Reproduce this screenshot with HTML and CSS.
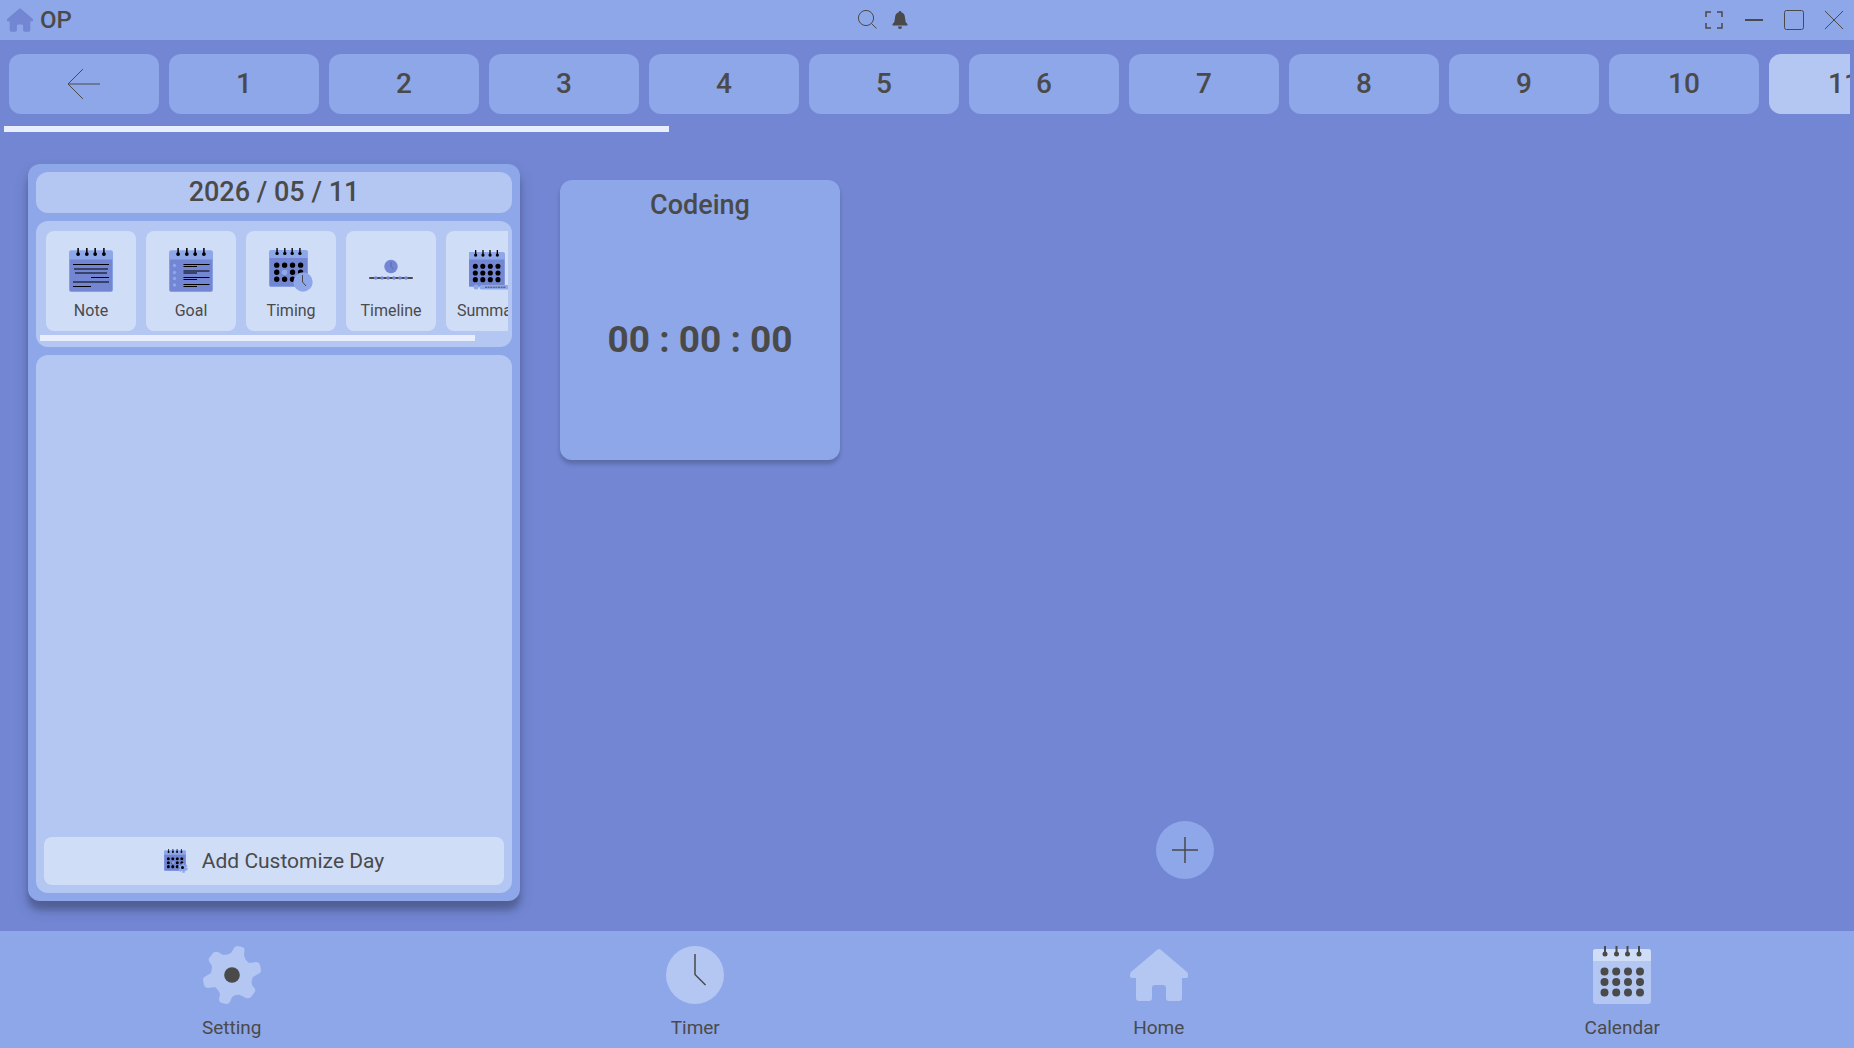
FILE: index.html
```html
<!DOCTYPE html>
<html lang="en">
<head>
    <meta charset="UTF-8">
    <meta name="viewport" content="width=device-width, initial-scale=1.0">
    <title>OP</title>
    <link rel="stylesheet" href="styles.css">
</head>
<body>
    <svg class="sprite" aria-hidden="true">
        <symbol id="home" viewBox="0 0 58 58">
            <path d="M27 4Q29 2 31 4L57 26Q58 27 58 29V30Q58 32 55 32H52V52Q52 55 49 55H39Q36 55 36 52V42Q36 39 33 39H25Q22 39 22 42V52Q22 55 19 55H9Q6 55 6 52V32H3Q0 32 0 30V29Q0 27 1 26Z"/>
        </symbol>
        <symbol id="pins" viewBox="0 0 58 12">
            <path d="M12 0V8M23.5 0V8M34.5 0V8M46 0V8" stroke="currentColor" stroke-width="2"/>
            <g fill="currentColor">
                <circle cx="12" cy="8" r="2.5"/><circle cx="23.5" cy="8" r="2.5"/><circle cx="34.5" cy="8" r="2.5"/><circle cx="46" cy="8" r="2.5"/>
            </g>
        </symbol>
        <symbol id="dots" viewBox="0 0 58 58">
            <path d="M11.5 25.5h.01M23.2 25.5h.01M35 25.5h.01M47 25.5h.01M11.5 36h.01M23.2 36h.01M35 36h.01M47 36h.01M11.5 46.5h.01M23.2 46.5h.01M35 46.5h.01M47 46.5h.01" stroke="currentColor" stroke-width="8" stroke-linecap="round"/>
        </symbol>
        <symbol id="page" viewBox="0 0 58 58">
            <rect y="3" width="58" height="55" rx="3" fill="#8ea7e9"/>
            <path d="M1 15H57V55Q57 57 55 57H3Q1 57 1 55Z" fill="#7286d3"/>
            <use href="#pins" width="58" height="12"/>
        </symbol>
    </svg>

    <header class="titlebar">
        <div class="brand">
            <svg class="brand-icon"><use href="#home"/></svg>
            <span>OP</span>
        </div>
        <div class="quick">
            <button aria-label="Search">
                <svg viewBox="0 0 20 20"><circle cx="9" cy="8" r="7.6"/><path d="M14.5 13.5L19.5 18.5"/></svg>
            </button>
            <button aria-label="Notifications">
                <svg class="solid" viewBox="0 0 20 20"><path d="M10 1Q11.300 1 11.300 2.300Q15 3.500 15 8Q15 12 17.500 14.200V15.500H2.500V14.200Q5 12 5 8Q5 3.500 8.700 2.300Q8.700 1 10 1ZM8 16.500H12Q12 19 10 19Q8 19 8 16.500Z"/></svg>
            </button>
        </div>
        <div class="window-buttons">
            <button aria-label="Fullscreen">
                <svg viewBox="0 0 20 20"><path stroke-width="1.500" d="M2 7V2H7M13 2H18V7M18 13V18H13M7 18H2V13"/></svg>
            </button>
            <button aria-label="Minimize">
                <svg viewBox="0 0 20 20"><path stroke-width="2" d="M1 10H19"/></svg>
            </button>
            <button aria-label="Maximize">
                <svg viewBox="0 0 20 20"><rect x=".5" y=".5" width="19" height="19" rx="2"/></svg>
            </button>
            <button aria-label="Close">
                <svg viewBox="0 0 20 20"><path d="M1 1L19 19M19 1L1 19"/></svg>
            </button>
        </div>
    </header>

    <nav class="days" aria-label="Days">
        <div class="days-row">
            <button aria-label="Back">
                <svg class="arrow" viewBox="0 0 34 30"><path d="M33 15H1"/><path d="M16 0L1 15L16 30"/></svg>
            </button>
            <button>1</button>
            <button>2</button>
            <button>3</button>
            <button>4</button>
            <button>5</button>
            <button>6</button>
            <button>7</button>
            <button>8</button>
            <button>9</button>
            <button>10</button>
            <button class="active">11</button>
        </div>
        <div class="scroll-thumb days-thumb"></div>
    </nav>

    <main>
        <section class="panel">
            <h1>2026 / 05 / 11</h1>
            <div class="tools">
                <div class="tools-row">
                    <button>
                        <svg viewBox="0 0 44 44">
                            <use href="#page" width="44" height="44"/>
                            <path d="M4 16.500H40M5 21H39M6 25H38M22 29.500H40M4 34H40M4 38.500H22" stroke="#000"/>
                        </svg>
                        Note
                    </button>
                    <button>
                        <svg viewBox="0 0 44 44">
                            <use href="#page" width="44" height="44"/>
                            <path d="M14.500 16.500H40.500M14.500 18.500H28M14.500 23H40.500M14.500 25H28M14.500 29.500H40.500M14.500 31.500H28M14.500 36.500H40.500M14.500 38.500H28" stroke="#000"/>
                            <g fill="#8ea7e9"><circle cx="5.500" cy="17.500" r="1.700"/><circle cx="5.500" cy="24.500" r="1.700"/><circle cx="5.500" cy="30.500" r="1.700"/><circle cx="5.500" cy="37" r="1.700"/></g>
                        </svg>
                        Goal
                    </button>
                    <button>
                        <svg viewBox="0 0 44 44">
                            <use href="#page" width="39" height="39"/>
                            <use href="#dots" width="39" height="39"/>
                            <circle cx="15.600" cy="24.200" r="3" fill="#8ea7e9"/>
                            <circle cx="34" cy="34" r="9.700" fill="#8ea7e9"/>
                            <path d="M33.500 27V34L37 38" fill="none" stroke="#4a4a4a"/>
                        </svg>
                        Timing
                    </button>
                    <button>
                        <svg viewBox="0 0 44 44">
                            <circle cx="22" cy="18.500" r="6.700" fill="#7286d3"/>
                            <path d="M22 14V18.500L24.500 21" fill="none" stroke="#4a5a9a" stroke-width=".7"/>
                            <path d="M1 30H43" stroke="#4a4a4a" stroke-width="2" stroke-linecap="round"/>
                            <path d="M6.700 30h.01M13 30h.01M19 30h.01M25 30h.01M31 30h.01M37 30h.01" stroke="#7286d3" stroke-width="3.500" stroke-linecap="round"/>
                        </svg>
                        Timeline
                    </button>
                    <button>
                        <svg viewBox="1 0 44 44">
                            <use href="#page" y="2" width="37" height="37"/>
                            <use href="#dots" y="2" width="37" height="37"/>
                            <circle cx="8" cy="39" r="2.500" fill="#8ea7e9"/>
                            <rect x="11.500" y="37" width="34" height="4.500" rx="2" fill="#8ea7e9"/>
                            <path d="M17 39.200H38" stroke="#4a4a4a" stroke-dasharray="2 .6"/>
                        </svg>
                        Summary
                    </button>
                </div>
                <div class="scroll-thumb tools-thumb"></div>
            </div>
            <div class="entries">
                <button class="add-day">
                    <svg viewBox="0 0 24 24">
                        <use href="#page" width="22" height="22"/>
                        <use href="#dots" width="22" height="22"/>
                        <circle cx="9" cy="13.500" r="1.600" fill="#8ea7e9"/>
                        <circle cx="19" cy="19" r="3.800" fill="none" stroke="#8ea7e9" stroke-width="2" stroke-dasharray="2.400 1.600"/>
                        <circle cx="19" cy="19" r="3.200" fill="#8ea7e9"/>
                        <circle cx="18.500" cy="18.500" r="1.500"/>
                    </svg>
                    Add Customize Day
                </button>
            </div>
        </section>

        <section class="board">
            <article class="timer-card">
                <h2>Codeing</h2>
                <time>00 : 00 : 00</time>
            </article>
            <button class="add-timer" aria-label="Add timer">
                <svg viewBox="0 0 26 26"><path d="M13 0V26M0 13H26"/></svg>
            </button>
        </section>
    </main>

    <nav class="tabs" aria-label="Main">
        <a href="#setting">
            <svg viewBox="0 0 58 58">
                <path d="M31 2Q32 0 35 0L39 1Q42 2 41.500 4L41 10Q42 14 46 17L53 16Q56 16 57 19L58 24Q58 27 55 28L50 31Q48 35 49 39L52 43Q53 45 51 47L48 51Q46 53 43 52L37 49Q33 48 29 51L27 56Q26 58 23 58L19 57Q16 56 16 53L17 48Q16 44 12 41L5 42Q2 42 1 39L0 34Q0 31 3 30L8 27Q9 23 9 20L6 15Q5 13 7 11L10 7Q12 5 15 6L20 9Q25 9 28 7Z"/>
                <circle class="ink" cx="29" cy="29" r="7.800"/>
            </svg>
            Setting
        </a>
        <a href="#timer">
            <svg viewBox="0 0 58 58">
                <circle cx="29" cy="29" r="29"/>
                <path class="hands" d="M29 8V28.500L39.500 39"/>
            </svg>
            Timer
        </a>
        <a href="#home-page">
            <svg><use href="#home"/></svg>
            Home
        </a>
        <a href="#calendar">
            <svg viewBox="0 0 58 58">
                <rect y="3" width="58" height="55" rx="3"/>
                <path d="M0 15V6Q0 3 3 3H55Q58 3 58 6V15Z" fill="#d0ddf7"/>
                <use href="#pins" width="58" height="12"/>
                <use href="#dots" width="58" height="58"/>
            </svg>
            Calendar
        </a>
    </nav>
</body>
</html>
```

FILE: styles.css
```css
* {
    box-sizing: border-box;
}
body {
    margin: 0;
    height: 100vh;
    display: flex;
    flex-direction: column;
    overflow: hidden;
    font-family: Roboto, sans-serif;
    color: #4a4a4a;
    background-color: #7286d3;
}
button {
    padding: 0;
    border: none;
    font-family: inherit;
    color: inherit;
    background: none;
    cursor: pointer;
}
h1, h2 {
    margin: 0;
    font-size: 27px;
    font-weight: 500;
}
.sprite {
    display: none;
}

/* title bar */
.titlebar {
    height: 40px;
    display: flex;
    justify-content: space-between;
    align-items: center;
    background-color: #8ea7e9;
}
.brand {
    display: flex;
    align-items: center;
    gap: 7px;
    padding: 0 2px 0 7px;
    font-size: 24px;
    font-weight: 500;
}
.brand-icon {
    width: 26px;
    height: 26px;
    fill: #7286d3;
}
.quick {
    display: flex;
    gap: 13px;
}
.window-buttons {
    display: flex;
}
.window-buttons button {
    width: 40px;
    height: 40px;
}
.titlebar button svg {
    display: block;
    width: 20px;
    height: 20px;
    margin: 0 auto;
    fill: none;
    stroke: #4a4a4a;
}
.titlebar button svg.solid {
    fill: #4a4a4a;
    stroke: none;
}

/* days */
.days {
    padding: 14px 4px 0;
}
.days-row {
    display: flex;
    gap: 10px;
    padding-left: 5px;
    overflow: hidden;
}
.days-row button {
    flex: 0 0 150px;
    height: 60px;
    padding-bottom: 2px;
    border-radius: 12px;
    font-size: 28px;
    font-weight: 500;
    background-color: #8ea7e9;
}
.days-row .active {
    background-color: #b4c6f2;
}
.arrow {
    display: block;
    width: 34px;
    height: 30px;
    margin: 2px auto 0;
    fill: none;
    stroke: #4a4a4a;
}
.scroll-thumb {
    height: 6px;
    background-color: #e8eefb;
}
.days-thumb {
    width: 36%;
    margin-top: 12px;
}

/* left panel */
main {
    flex: 1;
    min-height: 0;
    display: flex;
    padding: 32px 4px 30px 28px;
}
.panel {
    width: 492px;
    display: flex;
    flex-direction: column;
    gap: 8px;
    padding: 8px;
    border-radius: 12px;
    background-color: #8ea7e9;
    box-shadow: 0 8px 16px rgba(0, 0, 0, 0.14), 0 9px 6px rgba(0, 0, 0, 0.2);
}
.panel h1 {
    line-height: 41px;
    text-align: center;
    border-radius: 12px;
    background-color: #b4c6f2;
}
.tools {
    padding: 10px 4px 6px;
    border-radius: 12px;
    background-color: #b4c6f2;
}
.tools-row {
    display: flex;
    gap: 10px;
    padding-left: 6px;
    overflow: hidden;
}
.tools-row button {
    flex: 0 0 90px;
    height: 100px;
    display: flex;
    flex-direction: column;
    align-items: center;
    gap: 9px;
    padding-top: 17px;
    border-radius: 8px;
    font-size: 16px;
    background-color: #d0ddf7;
}
.tools-row svg {
    flex: none;
    width: 44px;
    height: 44px;
    color: #000;
}
.tools-thumb {
    width: 93%;
    margin-top: 4px;
}
.entries {
    flex: 1;
    display: flex;
    flex-direction: column;
    justify-content: flex-end;
    padding: 8px;
    border-radius: 12px;
    background-color: #b4c6f2;
}
.add-day {
    height: 48px;
    display: flex;
    justify-content: center;
    align-items: center;
    gap: 14px;
    border-radius: 8px;
    font-size: 21px;
    background-color: #d0ddf7;
}
.add-day svg {
    width: 24px;
    height: 24px;
    color: #000;
}

/* timers */
.board {
    flex: 1;
    display: flex;
    flex-direction: column;
    justify-content: space-between;
    padding: 16px 0 22px;
}
.timer-card {
    width: 280px;
    height: 280px;
    display: flex;
    flex-direction: column;
    margin-left: 40px;
    text-align: center;
    border-radius: 12px;
    background-color: #8ea7e9;
    box-shadow: 0 4px 4px rgba(0, 0, 0, 0.2);
}
.timer-card h2 {
    line-height: 50px;
}
.timer-card time {
    line-height: 220px;
    font-size: 37px;
    font-weight: 700;
}
.add-timer {
    align-self: center;
    width: 58px;
    height: 58px;
    border-radius: 50%;
    background-color: #8ea7e9;
}
.add-timer svg {
    display: block;
    width: 26px;
    height: 26px;
    margin: 0 auto;
    stroke: #4a4a4a;
    stroke-width: 1.5;
}

/* bottom tabs */
.tabs {
    height: 117px;
    display: flex;
    background-color: #8ea7e9;
}
.tabs a {
    flex: 1;
    display: flex;
    flex-direction: column;
    align-items: center;
    gap: 12px;
    padding-top: 15px;
    font-size: 19px;
    color: inherit;
    text-decoration: none;
}
.tabs svg {
    width: 58px;
    height: 58px;
    fill: #b4c6f2;
}
.tabs .ink {
    fill: #4a4a4a;
}
.tabs .hands {
    fill: none;
    stroke: #4a4a4a;
    stroke-width: 1.5;
}
```
